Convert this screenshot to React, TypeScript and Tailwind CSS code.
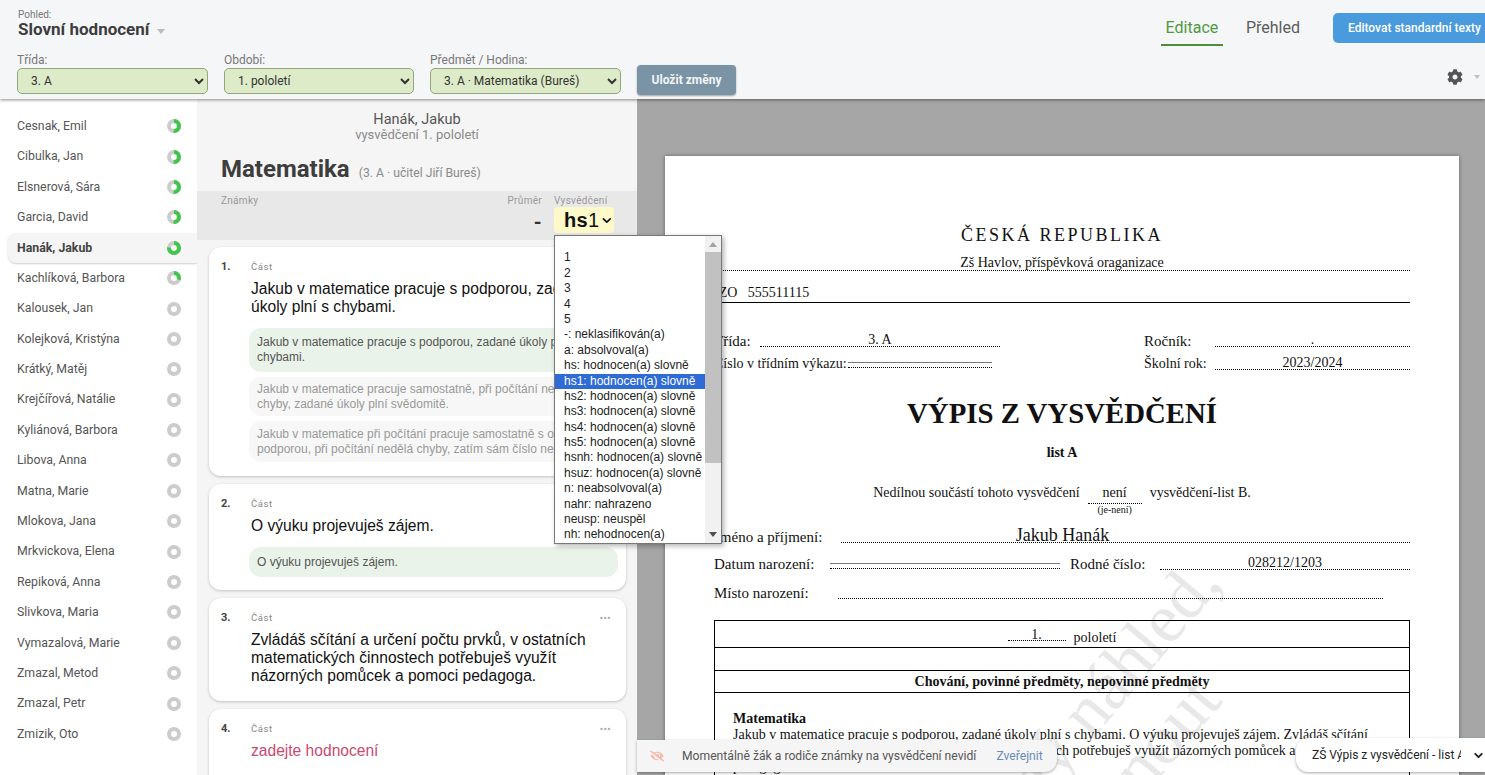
import { ChevronDown } from "lucide-react";
import { FaCog, FaEyeSlash } from "react-icons/fa";

const students: [string, number][] = [
  ["Cesnak, Emil", 50],
  ["Cibulka, Jan", 50],
  ["Elsnerová, Sára", 50],
  ["Garcia, David", 50],
  ["Hanák, Jakub", 75],
  ["Kachlíková, Barbora", 30],
  ["Kalousek, Jan", 0],
  ["Kolejková, Kristýna", 0],
  ["Krátký, Matěj", 0],
  ["Krejčířová, Natálie", 0],
  ["Kyliánová, Barbora", 0],
  ["Libova, Anna", 0],
  ["Matna, Marie", 0],
  ["Mlokova, Jana", 0],
  ["Mrkvickova, Elena", 0],
  ["Repiková, Anna", 0],
  ["Slivkova, Maria", 0],
  ["Vymazalová, Marie", 0],
  ["Zmazal, Metod", 0],
  ["Zmazal, Petr", 0],
  ["Zmizik, Oto", 0],
];

const grades = [
  "",
  "1",
  "2",
  "3",
  "4",
  "5",
  "-: neklasifikován(a)",
  "a: absolvoval(a)",
  "hs: hodnocen(a) slovně",
  "hs1: hodnocen(a) slovně",
  "hs2: hodnocen(a) slovně",
  "hs3: hodnocen(a) slovně",
  "hs4: hodnocen(a) slovně",
  "hs5: hodnocen(a) slovně",
  "hsnh: hodnocen(a) slovně",
  "hsuz: hodnocen(a) slovně",
  "n: neabsolvoval(a)",
  "nahr: nahrazeno",
  "neusp: neuspěl",
  "nh: nehodnocen(a)",
];

const Ring = ({ pct }: { pct: number }) => {
  const c = 2 * Math.PI * 5;
  return (
    <svg width="14" height="14" viewBox="0 0 14 14" className="shrink-0">
      <circle cx="7" cy="7" r="5" fill="none" stroke="#cccccc" strokeWidth="4" />
      {pct > 0 && (
        <circle
          cx="7"
          cy="7"
          r="5"
          fill="none"
          stroke="#40c64a"
          strokeWidth="4"
          strokeDasharray={`${(c * pct) / 100} ${c}`}
          transform="rotate(-90 7 7)"
        />
      )}
    </svg>
  );
};

const Filter = ({ label, value, width }: { label: string; value: string; width: string }) => (
  <div className={`flex flex-col ${width}`}>
    <label className="text-xs leading-4 text-[#777]">{label}</label>
    <select className="h-[26px] w-full rounded-[5px] border border-[#93a67c] bg-[#deebc8] pl-[9px] text-xs text-[#333]">
      <option>{value}</option>
    </select>
  </div>
);

const Card = ({
  num,
  text,
  height,
  chips,
  empty,
}: {
  num: string;
  text: string[];
  height: string;
  chips?: { lines: string[]; active?: boolean; h: string }[];
  empty?: boolean;
}) => (
  <div className={`${height} shrink-0 rounded-xl bg-white pl-3 pr-2 pt-[13px] shadow-[0_1px_3px_rgba(0,0,0,0.22)]`}>
    <div className="flex items-center">
      <span className="w-[30px] text-[11px] font-bold leading-[14px] text-[#444]">{num}</span>
      <span className="text-[9.5px] leading-[14px] tracking-[0.6px] text-[#888]">Část</span>
      <span className="ml-auto mr-[7px] text-[9px] font-bold leading-[10px] tracking-[0.5px] text-[#aaa]">•••</span>
    </div>
    <div className={`ml-[30px] mt-[6px] font-['Liberation_Sans',sans-serif] text-[15.6px] leading-[18px] ${empty ? "text-[#c9496f]" : "text-[#111]"}`}>
      {text.map((t) => (
        <div key={t} className="whitespace-nowrap">
          {t}
        </div>
      ))}
    </div>
    {chips && (
      <div className="ml-7 mt-[12px] flex flex-col gap-[5px]">
        {chips.map((c) => (
          <div
            key={c.lines[0]}
            className={`${c.h} flex flex-col justify-center rounded-xl px-2 font-['Liberation_Sans',sans-serif] text-xs leading-[15px] ${c.active ? "bg-[#e9f3e9] text-[#555]" : "bg-[#f7f7f7] text-[#999]"}`}
          >
            {c.lines.map((l) => (
              <div key={l} className="whitespace-nowrap">
                {l}
              </div>
            ))}
          </div>
        ))}
      </div>
    )}
  </div>
);

const Dotted = ({ className, children }: { className: string; children?: string }) => (
  <span className={`border-b border-dotted border-black text-center leading-[12px] ${className}`}>{children}</span>
);

export default function App() {
  return (
    <div className="relative flex h-[775px] w-[1485px] flex-col overflow-hidden bg-white font-['Roboto',sans-serif]">
      {/* Top bar */}
      <header className="relative z-20 flex h-[99px] shrink-0 justify-between bg-[#f5f6f8] pl-[17px] shadow-[0_1px_3px_rgba(0,0,0,0.45)]">
        <div>
          <div className="pl-px pt-[10px] text-[10px] leading-[10px] text-[#777]">Pohled:</div>
          <div className="flex items-center gap-2 pl-px text-[17px] font-bold leading-[18px] text-[#3d3d3d]">
            Slovní hodnocení
            <span className="mt-1 h-0 w-0 border-x-4 border-t-[5px] border-x-transparent border-t-[#bbb]" />
          </div>
          <div className="mt-[14px] flex items-end gap-4">
            <Filter label="Třída:" value="3. A" width="w-[191px]" />
            <Filter label="Období:" value="1. pololetí" width="w-[190px]" />
            <Filter label="Předmět / Hodina:" value="3. A · Matematika (Bureš)" width="w-[191px]" />
            <button className="mb-[-1px] h-[30px] w-[99px] rounded bg-[#7a93a5] text-xs font-bold text-[#f2f5f7] shadow-[0_1px_2px_rgba(0,0,0,0.35)]">
              Uložit změny
            </button>
          </div>
        </div>
        <div className="flex flex-col items-end">
          <div className="mt-[13px] flex items-start">
            <div className="mr-[23px] flex h-[33px] w-[62px] items-start justify-center border-b-2 border-[#4b9038] pt-[5px] text-base leading-[19px] text-[#4f9a3f]">
              Editace
            </div>
            <div className="mr-[33px] pt-[5px] text-base leading-[19px] text-[#5c5c5c]">Přehled</div>
            <button className="h-[30px] w-[152px] whitespace-nowrap rounded-l-[5px] bg-[#4a9ade] pl-[15px] text-left text-xs font-medium text-white">
              Editovat standardní texty
            </button>
          </div>
          <div className="mr-[5px] mt-[23px] flex items-center gap-[11px]">
            <FaCog size={16} className="text-[#555]" />
            <span className="h-0 w-0 border-x-[3.5px] border-t-4 border-x-transparent border-t-[#c0c0c0]" />
          </div>
        </div>
      </header>

      <div className="flex min-h-0 flex-1">
        {/* Students */}
        <aside className="w-[197px] shrink-0 bg-white pl-2 pt-[12px]">
          {students.map(([name, pct]) => {
            const active = name === "Hanák, Jakub";
            return (
              <div
                key={name}
                className={`flex h-[30.4px] items-center justify-between rounded-l-lg pl-[9px] pr-[16px] text-[12.3px] ${active ? "bg-[#f5f5f5] font-bold text-[#444] shadow-[0_1px_2px_rgba(0,0,0,0.2)]" : "text-[#555]"}`}
              >
                {name}
                <Ring pct={pct} />
              </div>
            );
          })}
        </aside>

        {/* Hodnocení */}
        <main className="relative z-10 w-[440px] shrink-0 overflow-visible bg-[#f5f5f5]">
          <div className="pt-[13px] text-center leading-[15px]">
            <div className="text-[14.5px] text-[#555]">Hanák, Jakub</div>
            <div className="text-[13px] text-[#8a8a8a]">vysvědčení 1. pololetí</div>
          </div>
          <div className="mt-[11px] flex items-baseline gap-[9px] pl-6">
            <h1 className="text-2xl font-bold leading-[32px] text-[#3d3d3d]">Matematika</h1>
            <span className="text-[12.2px] text-[#8a8a8a]">(3. A · učitel Jiří Bureš)</span>
          </div>
          <div className="mt-[6px] flex h-[49px] justify-between bg-[#e8e8e8] pl-6 pr-[23px] pt-[5px] text-[10px] leading-[10px] tracking-[0.3px] text-[#999]">
            <span>Známky</span>
            <div className="flex gap-[12px]">
              <div className="flex flex-col items-end">
                <span>Průměr</span>
                <span className="mt-[6px] text-xl font-bold leading-[20px] text-[#333]">-</span>
              </div>
              <div className="relative w-[60px]">
                <span className="whitespace-nowrap">Vysvědčení</span>
                <div className="mt-[1px] flex h-[26px] w-[60px] items-center rounded bg-[#fdf9c9] pl-[10px] font-['Liberation_Sans',sans-serif] text-xl text-[#111]">
                  <b>hs</b>1
                  <ChevronDown size={15} strokeWidth={3} className="ml-[1px]" />
                </div>
                {/* Otevřený výběr */}
                <div className="absolute left-0 top-[39px] z-30 flex h-[309px] w-[168px] border border-[#777] bg-white font-['Liberation_Sans',sans-serif] shadow-[2px_2px_5px_rgba(0,0,0,0.3)]">
                  <div className="-mt-px w-[150px] overflow-hidden">
                    {grades.map((g, i) => (
                      <div
                        key={i}
                        className={`h-[15.4px] whitespace-nowrap pl-[9px] text-xs font-normal leading-[15.4px] tracking-normal ${g.startsWith("hs1") ? "bg-[#2f6bd6] text-white" : "text-[#222]"}`}
                      >
                        {g}
                      </div>
                    ))}
                  </div>
                  <div className="flex w-[16px] flex-col items-center bg-[#f1f1f1]">
                    <span className="mt-[6px] h-0 w-0 border-x-[4px] border-b-[5px] border-x-transparent border-b-[#a3a3a3]" />
                    <span className="mt-[5px] h-[211px] w-full bg-[#c1c1c1]" />
                    <span className="mb-[6px] mt-auto h-0 w-0 border-x-[4px] border-t-[5px] border-x-transparent border-t-[#505050]" />
                  </div>
                </div>
              </div>
            </div>
          </div>
          <div className="mt-[7px] flex flex-col gap-2 pl-3 pr-[11px]">
            <Card
              num="1."
              height="h-[229px]"
              text={["Jakub v matematice pracuje s podporou, zadané", "úkoly plní s chybami."]}
              chips={[
                { lines: ["Jakub v matematice pracuje s podporou, zadané úkoly plní s", "chybami."], active: true, h: "h-[44px]" },
                { lines: ["Jakub v matematice pracuje samostatně, při počítání nedělá", "chyby, zadané úkoly plní svědomitě."], h: "h-[39px]" },
                { lines: ["Jakub v matematice při počítání pracuje samostatně s občasnou", "podporou, při počítání nedělá chyby, zatím sám číslo nenapíše"], h: "h-[41px]" },
              ]}
            />
            <Card
              num="2."
              height="h-[106px]"
              text={["O výuku projevuješ zájem."]}
              chips={[{ lines: ["O výuku projevuješ zájem."], active: true, h: "h-[30px]" }]}
            />
            <Card
              num="3."
              height="h-[103px]"
              text={["Zvládáš sčítání a určení počtu prvků, v ostatních", "matematických činnostech potřebuješ využít", "názorných pomůcek a pomoci pedagoga."]}
            />
            <Card num="4." height="h-[80px]" text={["zadejte hodnocení"]} empty />
          </div>
        </main>

        {/* Náhled vysvědčení */}
        <section className="min-w-0 flex-1 overflow-hidden bg-[#a6a6a6] pl-7 pt-[57px]">
          <div className="relative h-[800px] w-[794px] overflow-hidden bg-white px-[49px] pt-[67px] font-['Liberation_Serif',serif] text-sm text-[#111] shadow-[0_0_4px_rgba(0,0,0,0.4)]">
            <div className="pointer-events-none absolute left-[148px] top-[566px] w-[500px] -rotate-50 whitespace-nowrap text-right text-[70px] leading-[76px] text-[#e8e8e8]">
              <div>Předběžný náhled,</div>
              <div className="mr-[73px]">nelze stáhnout</div>
            </div>
            <div className="relative">
              <div className="text-center text-lg leading-6 tracking-[2.5px]">ČESKÁ REPUBLIKA</div>
              <div className="mt-[8px] border-b border-dotted border-black text-center leading-[15px]">
                Zš Havlov, příspěvková oraganizace
              </div>
              <div className="mt-[13px] border-b border-black pb-px pt-px leading-4">IZO&nbsp;&nbsp;&nbsp;555511115</div>
              <div className="mt-[31px] flex items-end">
                <span className="w-[46px] text-[15px] leading-[12px]">Třída:</span>
                <Dotted className="w-[240px]">3. A</Dotted>
                <span className="ml-[144px] w-[71px] text-[15px] leading-[12px]">Ročník:</span>
                <Dotted className="flex-1">.</Dotted>
              </div>
              <div className="mt-[10px] flex items-end">
                <span className="w-[134px] leading-[12px]">Číslo v třídním výkazu:</span>
                <span className="mb-[2px] h-[6px] w-[144px] border-y border-t-[#777] border-b-black [border-bottom-style:dotted]" />
                <span className="ml-[152px] w-[71px] leading-[12px]">Školní rok:</span>
                <Dotted className="flex-1">2023/2024</Dotted>
              </div>
              <div className="mt-[27px] text-center text-[28.8px] font-bold leading-[32px]">VÝPIS Z VYSVĚDČENÍ</div>
              <div className="mt-[16px] text-center font-bold leading-4">list A</div>
              <div className="mt-[24px] flex justify-center leading-4">
                <span>Nedílnou součástí tohoto vysvědčení</span>
                <div className="mx-[8px] flex w-[54px] flex-col items-center">
                  <span className="w-full border-b border-dotted border-black pb-[2px] text-center">není</span>
                  <span className="text-[10px] leading-[12px]">(je-není)</span>
                </div>
                <span>vysvědčení-list B.</span>
              </div>
              <div className="mt-[12px] flex items-end">
                <span className="w-[127px] whitespace-nowrap text-[15px] leading-[12px]">Jméno a příjmení:</span>
                <Dotted className="flex-1 pr-[126px] text-lg !leading-[14px]">Jakub Hanák</Dotted>
              </div>
              <div className="mt-[14px] flex items-end">
                <span className="w-[116px] whitespace-nowrap text-[15px] leading-[12px]">Datum narození:</span>
                <span className="mb-px h-[6px] w-[230px] border-y border-t-[#777] border-b-black [border-bottom-style:dotted]" />
                <span className="ml-[10px] w-[90px] whitespace-nowrap text-[15px] leading-[12px]">Rodné číslo:</span>
                <Dotted className="flex-1">028212/1203</Dotted>
              </div>
              <div className="mt-[17px] flex items-end">
                <span className="w-[124px] whitespace-nowrap text-[15px] leading-[12px]">Místo narození:</span>
                <span className="w-[545px] border-b border-dotted border-black" />
              </div>
              <div className="mt-[21px] border border-black">
                <div className="flex h-[27px] items-center justify-center border-b border-black pt-1">
                  <span className="mb-[2px] mr-2 w-[58px] border-b border-dotted border-black text-center leading-[11px]">1.</span>
                  <span className="mt-1">pololetí</span>
                </div>
                <div className="h-[23px] border-b border-black" />
                <div className="flex h-[22px] items-center justify-center border-b border-black font-bold">
                  Chování, povinné předměty, nepovinné předměty
                </div>
                <div className="pl-[18px] pr-[36px] pt-[18px] leading-4">
                  <div className="font-bold">Matematika</div>
                  <div>
                    Jakub v matematice pracuje s podporou, zadané úkoly plní s chybami. O výuku projevuješ zájem. Zvládáš sčítání a určení počtu prvků, v ostatních matematických činnostech potřebuješ využít názorných pomůcek a pomoci pedagoga.
                  </div>
                  <div className="mt-1 font-bold">Anglický jazyk</div>
                </div>
              </div>
            </div>
          </div>
        </section>
      </div>

      {/* Spodní lišty */}
      <div className="absolute bottom-[3px] left-[637px] z-20 flex h-[32px] w-[420px] items-center rounded-r-xl bg-[#f5f5f5] pl-[13px] text-[12.15px] shadow-[0_1px_3px_rgba(0,0,0,0.35)]">
        <FaEyeSlash size={14} className="text-[#f5b9a4]" />
        <span className="ml-[18px] text-[#555]">Momentálně žák a rodiče známky na vysvědčení nevidí</span>
        <span className="ml-[20px] text-[#6a8bb8]">Zveřejnit</span>
      </div>
      <div className="absolute bottom-[3px] right-0 z-20 flex h-[34px] w-[189px] items-center rounded-l-xl bg-white pl-[16px] text-xs text-[#222] shadow-[0_1px_3px_rgba(0,0,0,0.35)]">
        <span className="w-[153px] overflow-hidden whitespace-nowrap">ZŠ Výpis z vysvědčení - list A</span>
        <ChevronDown size={13} strokeWidth={3.5} className="ml-[11px] shrink-0" />
      </div>
    </div>
  );
}
